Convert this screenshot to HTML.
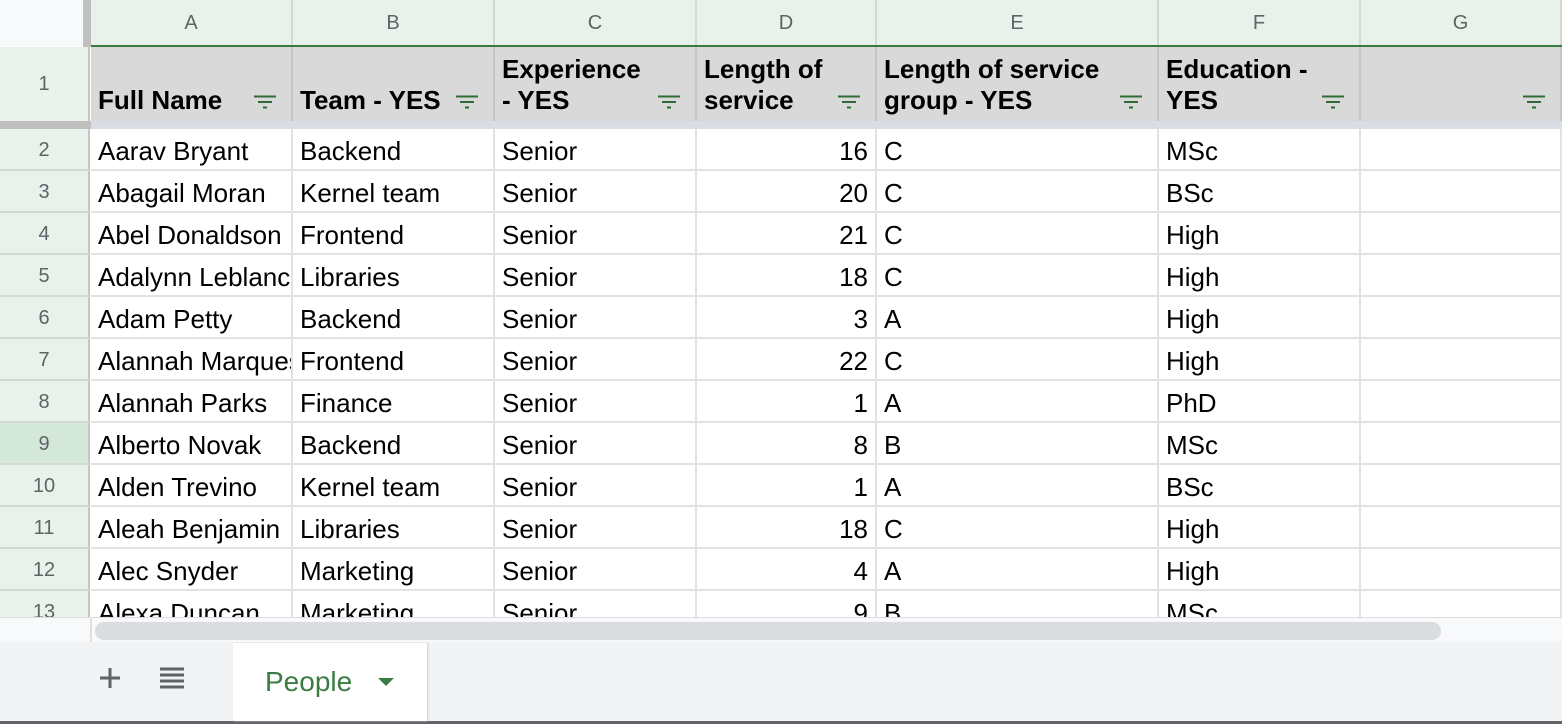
<!DOCTYPE html>
<html><head><style>
*{margin:0;padding:0;box-sizing:border-box}
body{width:1562px;height:724px;overflow:hidden;background:#fff;font-family:"Liberation Sans",Arial,sans-serif;position:relative}
.a{position:absolute}
.ch{top:0;height:46px;background:#e8f2ea;border-right:2px solid #d3d8d3;color:#5f6368;font-size:20px;text-align:center;line-height:46px}
.hd{top:47px;height:74px;background:#d9d9d9;border-right:2px solid #c6c6c6;font-weight:bold;font-size:26px;line-height:31px;padding:7px 7px 0;color:#000;white-space:nowrap}
.hd .t{position:absolute;bottom:5px;left:7px}
.f{position:absolute;right:14px;bottom:12px;width:24px;height:14px}
.rn{left:0;width:90px;background:#e8f2ea;border-right:2px solid #c6c6c6;border-bottom:2px solid #d3d8d3;color:#5f6368;font-size:20px;text-align:center;height:42px;line-height:42px}
.c{height:42px;border-right:2px solid #e2e2e2;border-bottom:2px solid #e2e2e2;font-size:26px;line-height:45px;padding:0 7px;white-space:nowrap;overflow:hidden;color:#000}
.r{text-align:right}
</style></head><body>
<div class="a" style="left:0;top:0;width:84px;height:46px;background:#f8f9fa;border-right:1px solid #ccc"></div>
<div class="a" style="left:83px;top:0;width:8px;height:47px;background:#c0c0c0"></div>
<div class="a" style="left:0;top:47px;width:90px;height:74px;background:#e8f2ea;color:#5f6368;font-size:20px;text-align:center;line-height:74px;border-right:2px solid #c6c6c6">1</div>
<div id="g"></div>
<div class="a" style="left:0;top:121px;width:91px;height:8px;background:#c0c0c0"></div>
<div class="a" style="left:91px;top:121px;width:1471px;height:8px;background:#dadde6"></div>
<div class="a" style="left:91px;top:45px;width:1471px;height:2px;background:#3a7a3e"></div>
<div class="a" style="left:0;top:642px;width:1562px;height:79px;background:#f1f3f4"></div>
<div class="a" style="left:0;top:721px;width:1562px;height:3px;background:#5f6368"></div>
<div class="a" style="left:233px;top:643px;width:194px;height:78px;background:#fff;box-shadow:1px 0 2px #ccc"></div>
<div class="a" style="left:265px;top:662px;font-size:28px;color:#3a7d44;line-height:40px">People</div>
<svg class="a" style="left:377px;top:677px" width="18" height="10"><path d="M1 1h16L9 9z" fill="#3a7d44"/></svg>
<svg class="a" style="left:98px;top:666px" width="24" height="24"><path d="M12 2v20M2 12h20" stroke="#5f6368" stroke-width="3"/></svg>
<svg class="a" style="left:159px;top:667px" width="26" height="22"><path d="M1 2h24M1 8h24M1 14h24M1 20h24" stroke="#5f6368" stroke-width="3"/></svg>
<script>
var cols=[[91,202,'A'],[293,202,'B'],[495,202,'C'],[697,180,'D'],[877,282,'E'],[1159,202,'F'],[1361,201,'G']];
var hdr=[['','Full Name'],['','Team - YES'],['Experience','- YES'],['Length of','service'],['Length of service','group - YES'],['Education -','YES'],['','']];
var rows=[["Aarav Bryant","Backend","Senior","16","C","MSc"],["Abagail Moran","Kernel team","Senior","20","C","BSc"],["Abel Donaldson","Frontend","Senior","21","C","High"],["Adalynn Leblanc","Libraries","Senior","18","C","High"],["Adam Petty","Backend","Senior","3","A","High"],["Alannah Marques","Frontend","Senior","22","C","High"],["Alannah Parks","Finance","Senior","1","A","PhD"],["Alberto Novak","Backend","Senior","8","B","MSc"],["Alden Trevino","Kernel team","Senior","1","A","BSc"],["Aleah Benjamin","Libraries","Senior","18","C","High"],["Alec Snyder","Marketing","Senior","4","A","High"],["Alexa Duncan","Marketing","Senior","9","B","MSc"]];
var h='';
var fil='<svg class="f" viewBox="0 0 24 14"><path d="M1 1.5h22M5 7h14M10 12.5h4" stroke="#2e6b34" stroke-width="2"/></svg>';
cols.forEach(function(c,i){
h+='<div class="a ch" style="left:'+c[0]+'px;width:'+c[1]+'px">'+c[2]+'</div>';
h+='<div class="a hd" style="left:'+c[0]+'px;width:'+c[1]+'px">'+hdr[i][0]+'<div class="t">'+hdr[i][1]+'</div>'+fil+'</div>';
});
rows.forEach(function(r,j){
var top=129+j*42;
h+='<div class="a rn" style="top:'+top+'px;'+(j==7?'background:#d4e8d9':'')+'">'+(j+2)+'</div>';
cols.forEach(function(c,i){
var v=i<6?r[i]:'';
h+='<div class="a c'+(i==3?' r':'')+'" style="left:'+c[0]+'px;top:'+top+'px;width:'+c[1]+'px">'+v+'</div>';
});
});
document.getElementById('g').innerHTML=h;
</script>
<div class="a" style="left:0;top:617px;width:1562px;height:25px;background:#f8f9fa;border-top:1px solid #ddd"></div>
<div class="a" style="left:90px;top:617px;width:2px;height:25px;background:#e0e0e0"></div>
<div class="a" style="left:95px;top:622px;width:1346px;height:18px;background:#dadce0;border-radius:9px"></div>
</body></html>
